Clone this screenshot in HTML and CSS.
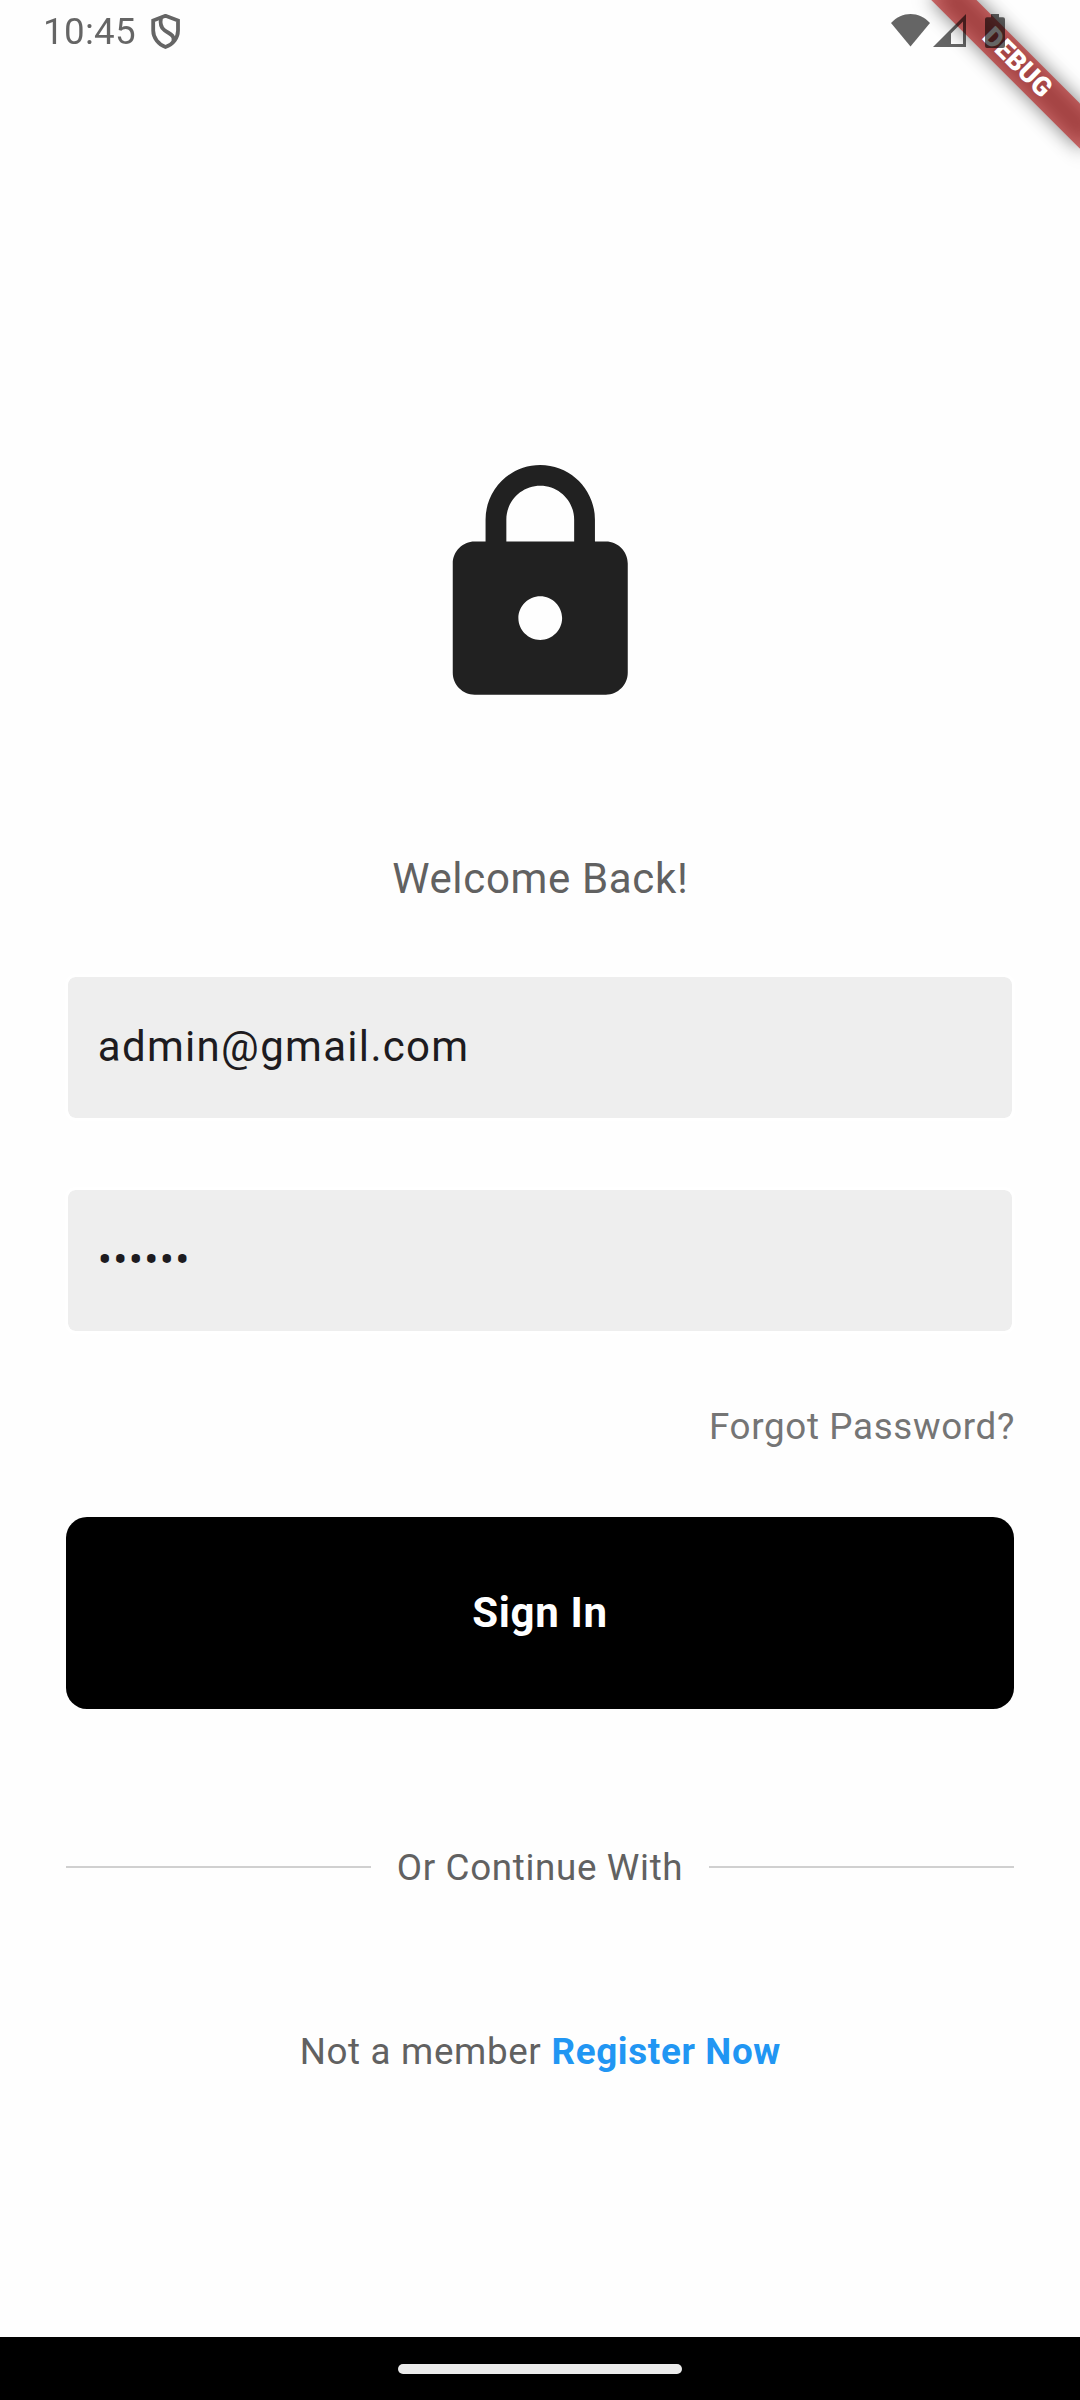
FILE: index.html
```html
<!DOCTYPE html>
<html lang="en">
<head>
<meta charset="utf-8">
<title>Sign In</title>
<link rel="stylesheet" href="styles.css">
</head>
<body>
<div class="screen">
  <div class="banner">
    <div class="banner-shadow"></div>
    <div class="banner-band">DEBUG</div>
  </div>
  <header class="status">
    <span class="clock">10:45</span>
    <svg class="shield" viewBox="0 0 30 36" width="30" height="36" fill="none" stroke="#000" stroke-width="3.800">
      <path d="M14.500 1.800 2.200 6.600V16.500C2.200 24 7.500 30.500 14.500 33 22 30.500 27 24 27 16.500V6.600Z"/>
      <path d="M10 4C9 9 9 13 13.500 16.300S22.500 20.500 22.500 24.500V28"/>
    </svg>
    <span class="spacer"></span>
    <svg class="wifi" viewBox="0 0 39 33" width="39" height="33"><path d="M0 9C11-3 28-3 39 9L19.500 32.500Z"/></svg>
    <svg class="signal" viewBox="0 0 33 33" width="33" height="33"><path fill-rule="evenodd" d="M33 0V33H0ZM30 7.500 18 19.500V30H30Z"/></svg>
    <svg class="battery" viewBox="0 0 20 34" width="20" height="34"><path d="M6 0H14V3.300H18Q20 3.300 20 5.300V32Q20 34 18 34H2Q0 34 0 32V5.300Q0 3.300 2 3.300H6Z"/></svg>
  </header>
  <main class="content">
    <svg class="lock" viewBox="0 0 24 24"><path d="M18 8h-1V6c0-2.760-2.240-5-5-5S7 3.240 7 6v2H6c-1.100 0-2 .9-2 2v10c0 1.100.9 2 2 2h12c1.100 0 2-.9 2-2V10c0-1.100-.9-2-2-2zm-6 9c-1.100 0-2-.9-2-2s.9-2 2-2 2 .9 2 2-.9 2-2 2zm3.100-9H8.900V6c0-1.710 1.390-3.100 3.100-3.100 1.710 0 3.100 1.390 3.100 3.100v2z"/></svg>
    <p class="welcome">Welcome Back!</p>
    <div class="field">admin@gmail.com</div>
    <div class="field">••••••</div>
    <p class="forgot">Forgot Password?</p>
    <div class="button">Sign In</div>
    <div class="divider"><span class="line"></span><span>Or Continue With</span><span class="line"></span></div>
    <p class="register"><span>Not a member</span><b>Register Now</b></p>
  </main>
  <footer class="nav"><span class="handle"></span></footer>
</div>
</body>
</html>
```
FILE: styles.css
```css
* { box-sizing: border-box; }
body {
  margin: 0;
  background: #fefefe;
  font-family: Roboto, sans-serif;
}
p { margin: 0; }
.screen {
  position: relative;
  display: flex;
  flex-direction: column;
  width: 1080px;
  height: 2400px;
  overflow: hidden;
}

/* Corner banner, beneath the status icons */
.banner {
  position: absolute;
  top: 47.36px;
  left: 911.89px;
  width: 210px;
  height: 31.5px;
  transform: rotate(45deg);
}
.banner-shadow {
  position: absolute;
  inset: 0;
  background: rgba(0, 0, 0, .5);
  filter: blur(9.6px);
}
.banner-band {
  position: absolute;
  inset: 0;
  background: rgba(183, 28, 28, .627);
  color: #fff;
  font-size: 26.775px;
  font-weight: 900;
  line-height: 31.5px;
  text-align: center;
}

.status {
  position: relative;
  display: flex;
  align-items: flex-start;
  height: 454.4px;
  padding: 14px 75px 0 43px;
  opacity: .6;
}
.clock {
  width: 108px;
  font-size: 36.75px;
  line-height: 36px;
  letter-spacing: .3px;
}
.spacer { flex: 1; }
.signal { margin: 0 19px 0 3px; }

.content {
  flex: 1;
  display: flex;
  flex-direction: column;
  padding: 0 65.6px;
  color: #616161;
  font-size: 36.75px;
  letter-spacing: .66px;
}
.lock {
  align-self: center;
  width: 262.5px;
  height: 262.5px;
  fill: #212121;
}
.welcome {
  margin-top: 132.1px;
  padding-left: .6px;
  font-size: 42px;
  line-height: 60px;
  text-align: center;
}
.field {
  height: 147px;
  margin: 65.2px -.6px 0;
  padding: 0 29.8px;
  border: 3px solid #fff;
  border-radius: 10.5px;
  background: #eee;
  background-clip: padding-box;
  color: #1d1b20;
  font-size: 42px;
  line-height: 140px;
  letter-spacing: 1.31px;
}
.field + .field { margin-top: 65.6px; }
.forgot {
  margin-top: 67px;
  margin-right: -.6px;
  color: #757575;
  line-height: 52px;
  text-align: right;
}
.button {
  height: 192px;
  margin: 64.4px 0 0;
  border-radius: 21px;
  background: #000;
  color: #fff;
  font-size: 42px;
  font-weight: 700;
  line-height: 192.5px;
  text-align: center;
}
.divider {
  display: flex;
  align-items: center;
  gap: 26.2px;
  margin-top: 133px;
  line-height: 52px;
}
.line {
  flex: 1;
  height: 2px;
  margin-top: -2px;
  background: #d0d0d0;
}
.register {
  display: flex;
  justify-content: center;
  gap: 10px;
  margin-top: 132.2px;
  padding-left: .6px;
  line-height: 52px;
}
.register b { color: #2196f3; }

.nav {
  display: flex;
  justify-content: center;
  height: 63px;
  padding-top: 27px;
  background: #000;
}
.handle {
  width: 284px;
  height: 10px;
  border-radius: 5px;
  background: #ebebeb;
}
```
